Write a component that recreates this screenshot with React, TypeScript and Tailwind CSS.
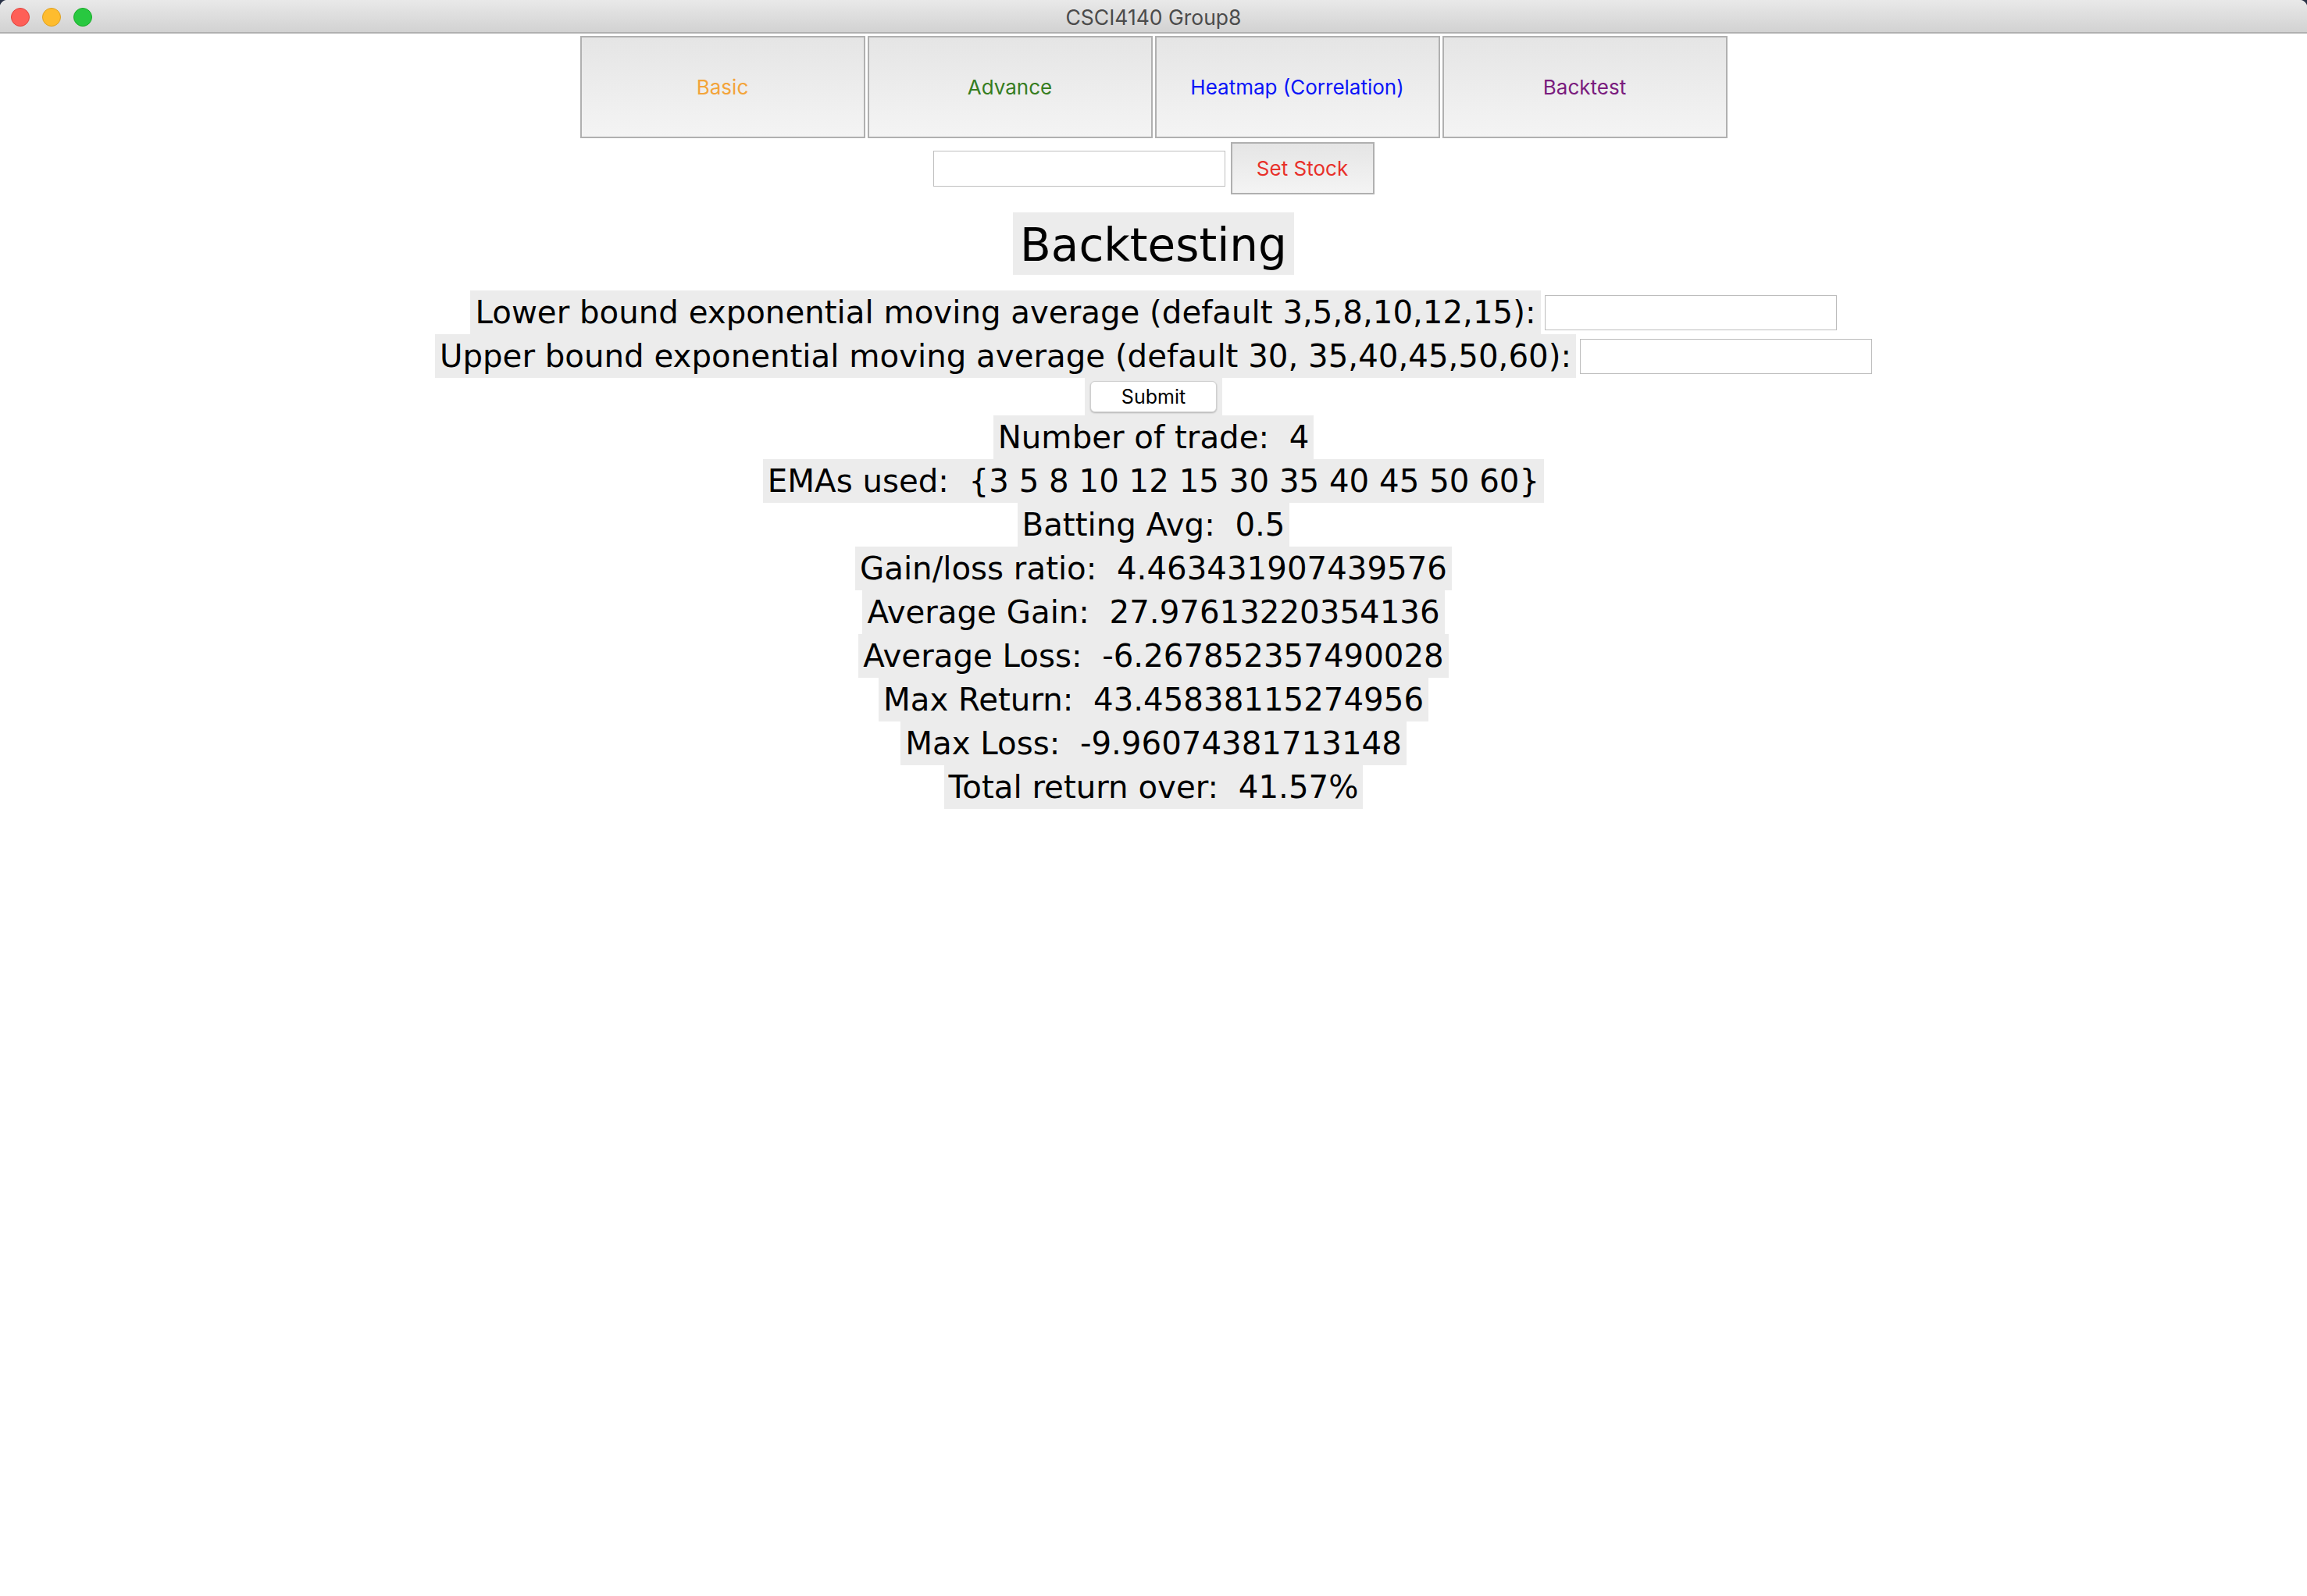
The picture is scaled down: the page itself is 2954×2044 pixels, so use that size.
import React from "react";

const tabs = [
  { label: "Basic", color: "text-[#f3a43a]" },
  { label: "Advance", color: "text-[#367d1f]" },
  { label: "Heatmap (Correlation)", color: "text-[#0a14f8]" },
  { label: "Backtest", color: "text-[#7a1c7e]" },
];

const stats = [
  "Number of trade:  4",
  "EMAs used:  {3 5 8 10 12 15 30 35 40 45 50 60}",
  "Batting Avg:  0.5",
  "Gain/loss ratio:  4.463431907439576",
  "Average Gain:  27.97613220354136",
  "Average Loss:  -6.267852357490028",
  "Max Return:  43.45838115274956",
  "Max Loss:  -9.96074381713148",
  "Total return over:  41.57%",
];

const sys = "font-['Inter','Helvetica_Neue','Liberation_Sans',sans-serif]";
const dv = "font-['DejaVu_Sans','Verdana',sans-serif]";

export default function App() {
  return (
    <div className="w-full h-[2044px] bg-[#2a3347]">
      <div className="w-full h-full bg-white rounded-t-[9px] overflow-hidden flex flex-col">
        {/* Title bar */}
        <div className="relative h-[43px] shrink-0 bg-linear-to-b from-[#e9e9e9] to-[#d2d2d2] border-b-[2px] border-[#b0b0b0] flex items-center justify-center">
          <div className="absolute left-[14px] top-[10px] flex gap-[16px]">
            <div className="w-[24px] h-[24px] rounded-full bg-[#fe5f57] border border-[#e0443e]" />
            <div className="w-[24px] h-[24px] rounded-full bg-[#febc2e] border border-[#dea123]" />
            <div className="w-[24px] h-[24px] rounded-full bg-[#28c840] border border-[#1aab29]" />
          </div>
          <span className={`${sys} text-[26.5px] text-[#4b4b4b] leading-none pt-[3px]`}>CSCI4140 Group8</span>
        </div>

        <div className="flex flex-col items-center">
          {/* Tabs */}
          <div className="flex gap-[3px] mt-[3px]">
            {tabs.map((t) => (
              <button
                key={t.label}
                className={`w-[365px] h-[131px] border-2 border-[#b0b0b0] bg-linear-to-b from-[#e5e5e5] to-[#f4f4f4] flex items-center justify-center ${sys} text-[26px] ${t.color}`}
              >
                {t.label}
              </button>
            ))}
          </div>

          {/* Stock row */}
          <div className="flex items-center gap-[7px] mt-[5px]">
            <input className="w-[374px] h-[46px] border border-[#bfbfbf] bg-white outline-none" />
            <button className={`w-[184px] h-[67px] border-2 border-[#b0b0b0] bg-linear-to-b from-[#e5e5e5] to-[#f4f4f4] ${sys} text-[26px] text-[#e8302a] flex items-center justify-center`}>
              Set Stock
            </button>
          </div>

          {/* Heading */}
          <div className={`mt-[23px] h-[80px] px-[9px] pt-[3px] bg-[#ececec] flex items-center ${dv} text-[58px] text-black leading-none`}>
            Backtesting
          </div>

          {/* EMA inputs */}
          <div className="flex items-center gap-[5px] mt-[20px] h-[56px]">
            <span className={`h-[56px] px-[6px] pt-[2px] bg-[#ececec] flex items-center ${dv} text-[40.3px] text-black whitespace-pre leading-none`}>
              Lower bound exponential moving average (default 3,5,8,10,12,15):
            </span>
            <input className="w-[374px] h-[45px] border border-[#bdbdbd] bg-white outline-none" />
          </div>
          <div className="flex items-center gap-[5px] h-[56px]">
            <span className={`h-[56px] px-[6px] pt-[2px] bg-[#ececec] flex items-center ${dv} text-[40.3px] text-black whitespace-pre leading-none`}>
              Upper bound exponential moving average (default 30, 35,40,45,50,60):
            </span>
            <input className="w-[374px] h-[45px] border border-[#bdbdbd] bg-white outline-none" />
          </div>

          {/* Submit */}
          <div className="w-[176px] h-[48px] bg-[#ececec] flex items-center justify-center">
            <button className={`w-[162px] h-[40px] bg-white border border-[#cfcfcf] rounded-[6px] shadow-[0_1px_2px_rgba(0,0,0,0.25)] ${sys} text-[25px] text-black flex items-center justify-center leading-none`}>
              Submit
            </button>
          </div>

          {/* Stats */}
          {stats.map((s) => (
            <div
              key={s}
              className={`h-[56px] px-[6px] pt-[2px] bg-[#ececec] flex items-center ${dv} text-[40.3px] text-black whitespace-pre leading-none`}
            >
              {s}
            </div>
          ))}
        </div>
      </div>
    </div>
  );
}
